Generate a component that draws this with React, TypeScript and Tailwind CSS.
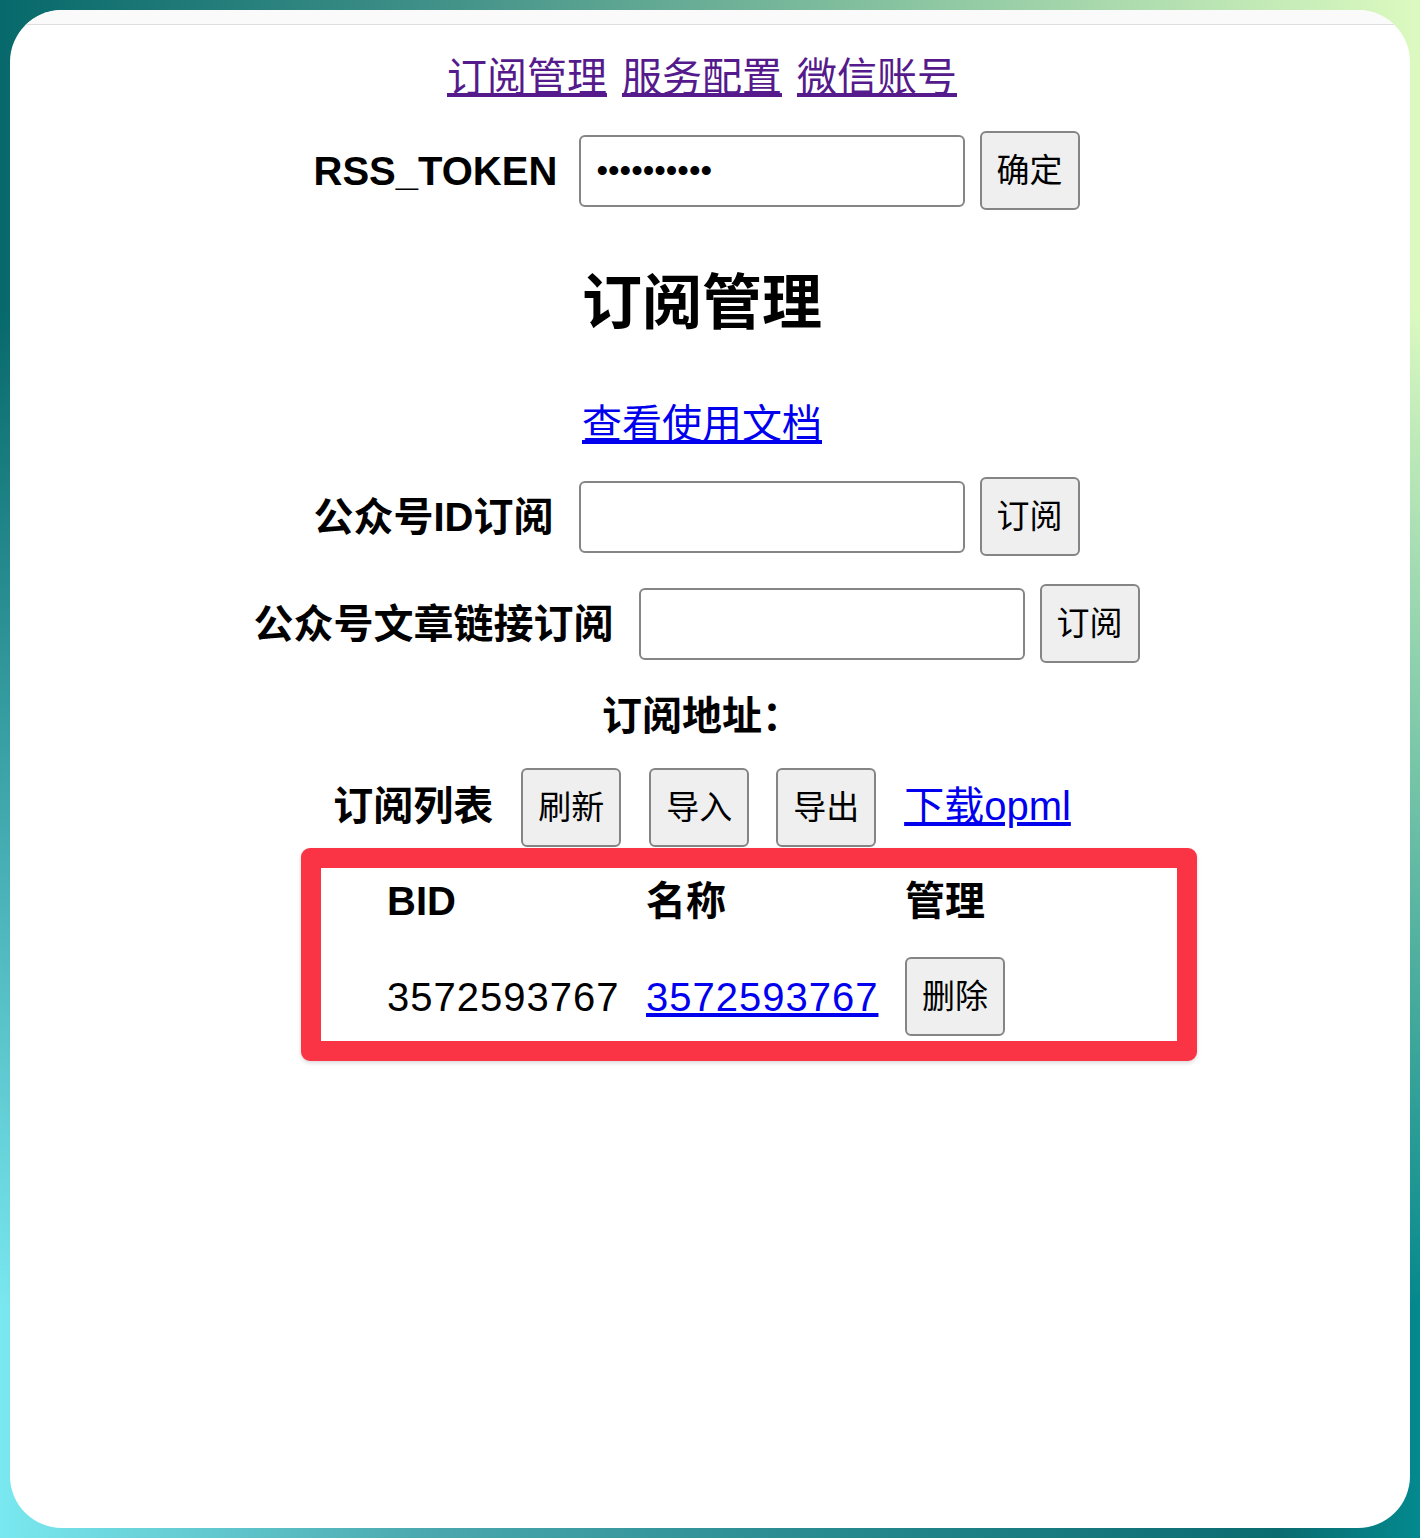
import React from 'react'

const FONT = { fontFamily: '"Liberation Sans", "Noto Sans CJK SC", sans-serif' }

function Btn({ children }: { children: React.ReactNode }) {
  return (
    <button className="w-[100px] h-[79px] shrink-0 rounded-[6px] border-2 border-[#858585] bg-[#efefef] text-[33px] leading-none text-black">
      {children}
    </button>
  )
}

function Field({ type = 'text', value }: { type?: string; value?: string }) {
  return (
    <input
      type={type}
      defaultValue={value}
      readOnly
      className="w-[386px] h-[72px] shrink-0 rounded-[6px] border-2 border-[#858585] bg-white px-[16px] text-[33px] text-black outline-none"
    />
  )
}

function FormRow({ label, labelWidth, type, value, button }: { label: string; labelWidth: string; type?: string; value?: string; button: string }) {
  return (
    <div className="flex items-center justify-center pr-[11px]">
      <span className={`${labelWidth} whitespace-nowrap text-[40px] font-bold leading-[46px]`}>{label}</span>
      <div className="ml-[29px]">
        <Field type={type} value={value} />
      </div>
      <div className="ml-[15px]">
        <Btn>{button}</Btn>
      </div>
    </div>
  )
}

export default function App() {
  return (
    <div className="grid h-[1538px] w-full overflow-hidden" style={FONT}>
      <div className="col-start-1 row-start-1 bg-[linear-gradient(to_right,#07696b_0%,#3f9088_30%,#8cc6a2_65%,#dcfac0_100%)]" />
      <div className="col-start-1 row-start-1 bg-[linear-gradient(to_right,#7ae8f0_0%,#4aa8ae_30%,#1f8388_65%,#0b6c70_90%,#03898e_100%)] [mask-image:linear-gradient(to_bottom,transparent_20%,black_85%)]" />

      <div className="relative z-10 col-start-1 row-start-1 m-[10px] flex flex-col overflow-hidden rounded-[52px] bg-white text-black">
        <div className="h-[15px] shrink-0 border-b border-[#dedede] bg-[#fafafa]" />

        <div className="flex flex-col pr-[16px]">
          <nav className="mt-[29px] flex justify-center gap-[15px] text-[40px] leading-[46px] text-[#551a8b]">
            <a href="#" className="underline">订阅管理</a>
            <a href="#" className="underline">服务配置</a>
            <a href="#" className="underline">微信账号</a>
          </nav>

          <div className="mt-[31px]">
            <FormRow label="RSS_TOKEN" labelWidth="w-[236px]" type="password" value="1234567890" button="确定" />
          </div>

          <h2 className="mt-[59px] text-center text-[60px] font-bold leading-[70px]">订阅管理</h2>

          <div className="mt-[62px] text-center text-[40px] leading-[46px]">
            <a href="#" className="text-[#0000ee] underline">查看使用文档</a>
          </div>

          <div className="mt-[30px]">
            <FormRow label="公众号ID订阅" labelWidth="w-[236px]" button="订阅" />
          </div>

          <div className="mt-[28px]">
            <FormRow label="公众号文章链接订阅" labelWidth="w-[356px]" button="订阅" />
          </div>

          <div className="mt-[30px] text-center text-[40px] font-bold leading-[46px]">订阅地址：</div>

          <div className="mt-[29px] flex items-center justify-center">
            <span className="-mt-[4px] text-[40px] font-bold leading-[46px]">订阅列表</span>
            <div className="ml-[28px]"><Btn>刷新</Btn></div>
            <div className="ml-[28px]"><Btn>导入</Btn></div>
            <div className="ml-[27px]"><Btn>导出</Btn></div>
            <a href="#" className="-mt-[4px] ml-[28px] text-[40px] leading-[46px] text-[#0000ee] underline">下载opml</a>
          </div>

          <div className="mt-[1px] ml-[291px] w-[896px] rounded-[9px] border-[20px] border-[#fa3444] bg-white shadow-[0_2px_4px_rgba(0,0,0,0.15)]">
            <div className="grid grid-cols-[259px_259px_auto] pl-[66px] pt-[10px] pb-[5px] text-[40px] leading-[46px]">
              <div className="font-bold">BID</div>
              <div className="font-bold">名称</div>
              <div className="font-bold">管理</div>
              <div className="mt-[33px] flex items-center tracking-[1px]">3572593767</div>
              <div className="mt-[33px] flex items-center">
                <a href="#" className="tracking-[1px] text-[#0000ee] underline">3572593767</a>
              </div>
              <div className="mt-[33px]"><Btn>删除</Btn></div>
            </div>
          </div>
        </div>
      </div>
    </div>
  )
}
